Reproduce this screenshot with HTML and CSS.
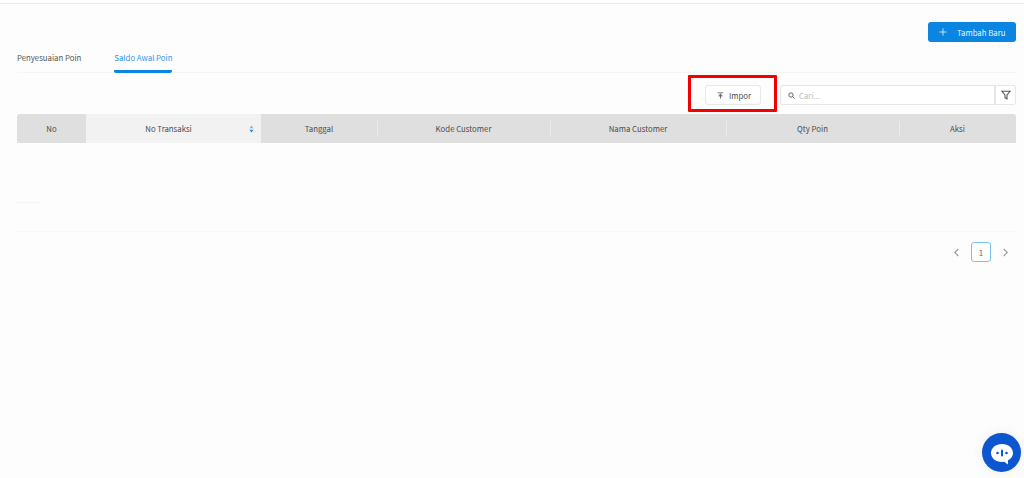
FILE: index.html
```html
<!DOCTYPE html>
<html lang="id">
<head>
<meta charset="utf-8">
<title>Saldo Awal Poin</title>
<link rel="stylesheet" href="styles.css">
</head>
<body>
<div class="topline"></div>
<main class="page">
  <div class="actions">
    <button class="btn-primary">
      <svg class="plus" viewBox="0 0 10 10"><path d="M5 .5v9M.5 5h9"/></svg>
      <span>Tambah Baru</span>
    </button>
  </div>
  <nav class="tabs">
    <a class="tab">Penyesuaian Poin</a>
    <a class="tab active">Saldo Awal Poin</a>
  </nav>
  <div class="toolbar">
    <div class="highlight">
      <button class="btn-import">
        <svg class="import-icon" viewBox="0 0 10 10"><path d="M1 1.200h8M5 9.500V3M2.200 5.600 5 3l2.800 2.600M2.600 5.600h4.800"/></svg>
        <span>Impor</span>
      </button>
    </div>
    <div class="search">
      <div class="search-field">
        <svg class="search-icon" viewBox="0 0 10 10"><circle cx="4.300" cy="4.300" r="3.100"/><path d="m6.600 6.600 2.600 2.600"/></svg>
        <span class="placeholder">Cari...</span>
      </div>
      <button class="filter">
        <svg viewBox="0 0 12 12"><path d="M1 1.500h10L7.200 6v4.600L4.800 9.400V6z"/></svg>
      </button>
    </div>
  </div>
  <div class="table-head">
    <div class="th col-no">No</div>
    <div class="th col-trans sorted">No Transaksi
      <svg class="sort" viewBox="0 0 6 10"><path class="up" d="M3 .5 5.600 4H.4z"/><path class="down" d="M3 9.500.4 6h5.200z"/></svg>
    </div>
    <div class="th col-date">Tanggal</div>
    <div class="th col-code sep">Kode Customer</div>
    <div class="th col-name sep">Nama Customer</div>
    <div class="th col-qty sep">Qty Poin</div>
    <div class="th col-act sep">Aksi</div>
  </div>
  <div class="table-empty">
    <div class="empty-line"></div>
  </div>
  <div class="pager">
    <svg class="chev chev-prev" viewBox="0 0 8 10"><path d="M6 1 2 5l4 4"/></svg>
    <span class="page-num">1</span>
    <svg class="chev" viewBox="0 0 8 10"><path d="m2 1 4 4-4 4"/></svg>
  </div>
</main>
<button class="chat" aria-label="Chat">
  <svg viewBox="0 0 24 22"><path class="bubble" d="M12 1C5.600 1 1 4.900 1 10c0 5 4.600 9 11 9 .9 0 1.500-.1 2.200-.2L18 21.500v-4.200c3-1.600 5-4.200 5-7.300C23 4.900 18.400 1 12 1z"/><circle cx="7.500" cy="10" r="1.300"/><rect x="11" y="6.500" width="2" height="7" rx="1"/><circle cx="16.500" cy="10" r="1.300"/></svg>
</button>
</body>
</html>
```
FILE: styles.css
```css
* { box-sizing: border-box; }
html, body { height: 100%; }
body {
  margin: 0;
  background: #fdfdfd;
  color: #4a4a4a;
  font-family: "Noto Sans CJK SC", "Noto Sans", sans-serif;
  font-size: 7.8px;
  overflow: hidden;
}
button { font: inherit; cursor: pointer; }
.topline { height: 4px; border-bottom: 1px solid #ececec; background: #fff; }
.page { padding: 18px 8px 0 17px; }
.actions { display: flex; justify-content: flex-end; height: 20px; }
.btn-primary {
  width: 88px; height: 20px; padding: 0 0 0 11px;
  display: flex; align-items: center; gap: 10px;
  border: 0; border-radius: 3px;
  background: #0a85e0; color: #e8f4fd; white-space: nowrap;
}
.plus { flex: none; width: 8px; height: 8px; fill: none; stroke: #e8f4fd; stroke-width: 1; }
.tabs {
  display: flex; gap: 33px; height: 21px; margin-top: 10px;
  border-bottom: 1px solid #f7f7f2;
}
.tab { display: block; height: 21px; line-height: 12px; color: #555; }
.tab.active { color: #2d96e6; border-bottom: 3px solid #0a85e0; border-radius: 0 0 2px 2px; }
.toolbar { display: flex; justify-content: flex-end; align-items: flex-start; height: 37px; margin-top: 2px; gap: 3px; }
.highlight {
  width: 89px; height: 37px; border: 3px solid #f40000; border-radius: 1px;
  padding: 7px 13px 7px 14px;
}
.btn-import {
  width: 56px; height: 20px; padding: 0 0 0 11px;
  display: flex; align-items: center; gap: 5px;
  border: 1px solid #e8e8e8; border-radius: 3px; background: #fff; color: #4a4a4a;
}
.import-icon { flex: none; width: 7px; height: 7px; fill: none; stroke: #444; stroke-width: 1; }
.search { display: flex; width: 236px; height: 20px; margin-top: 10px; }
.search-field {
  flex: 1; display: flex; align-items: center; gap: 4px; padding-left: 7px;
  border: 1px solid #e6e6e6; border-right-width: 2px; border-radius: 3px 0 0 3px; background: #fff;
}
.search-icon { flex: none; width: 7px; height: 7px; fill: none; stroke: #555; stroke-width: 1.300; }
.placeholder { color: #bdbdbd; }
.filter {
  width: 20px; padding: 0; display: flex; align-items: center; justify-content: center;
  border: 1px solid #e6e6e6; border-left: 0; border-radius: 0 3px 3px 0; background: #fff;
}
.filter svg { width: 10px; height: 10px; fill: none; stroke: #555; stroke-width: 1.300; }
.table-head {
  display: flex; height: 29px; margin-top: 2px;
  background: #dfdfdf; border-radius: 3px 3px 0 0; overflow: hidden;
}
.th { position: relative; display: flex; align-items: center; justify-content: center; color: #4c4c4c; }
.col-no { width: 69px; }
.col-trans { width: 175px; padding-right: 10px; }
.col-date { width: 116px; }
.col-code { width: 173px; }
.col-name { width: 176px; }
.col-qty { width: 173px; }
.col-act { flex: 1; }
.sorted { background: #f2f2f2; }
.sep::before {
  content: ""; position: absolute; left: 0; top: 7px; bottom: 7px; width: 1px; background: #ececec;
}
.sort { position: absolute; right: 7px; top: 11px; width: 5px; height: 8px; }
.sort .up { fill: #7db8e8; }
.sort .down { fill: #1a8be0; }
.table-empty { height: 89px; border-bottom: 1px solid #f8f8f8; position: relative; }
.empty-line { position: absolute; left: 0; top: 59px; width: 22px; height: 1px; background: #f7f4f4; }
.pager { display: flex; justify-content: flex-end; align-items: center; gap: 10px; height: 20px; margin-top: 10px; padding-right: 7px; }
.chev { width: 7px; height: 9px; fill: none; stroke: #999; stroke-width: 1.300; }
.chev-prev { margin-right: 1px; }
.page-num {
  width: 20px; height: 20px; margin-right: 1px; display: flex; align-items: center; justify-content: center;
  border: 1px solid #7cc0f2; border-radius: 3px; color: #666; background: #fff;
}
.chat {
  position: fixed; left: 982px; top: 433px; width: 39px; height: 39px; padding: 0;
  display: flex; align-items: center; justify-content: center;
  border: 0; border-radius: 50%; background: #0c56cf;
  box-shadow: 0 0 10px rgba(200, 180, 170, .25);
}
.chat svg { width: 24px; height: 22px; margin-top: 3px; fill: #0c56cf; }
.chat .bubble { fill: #fff; }
```
